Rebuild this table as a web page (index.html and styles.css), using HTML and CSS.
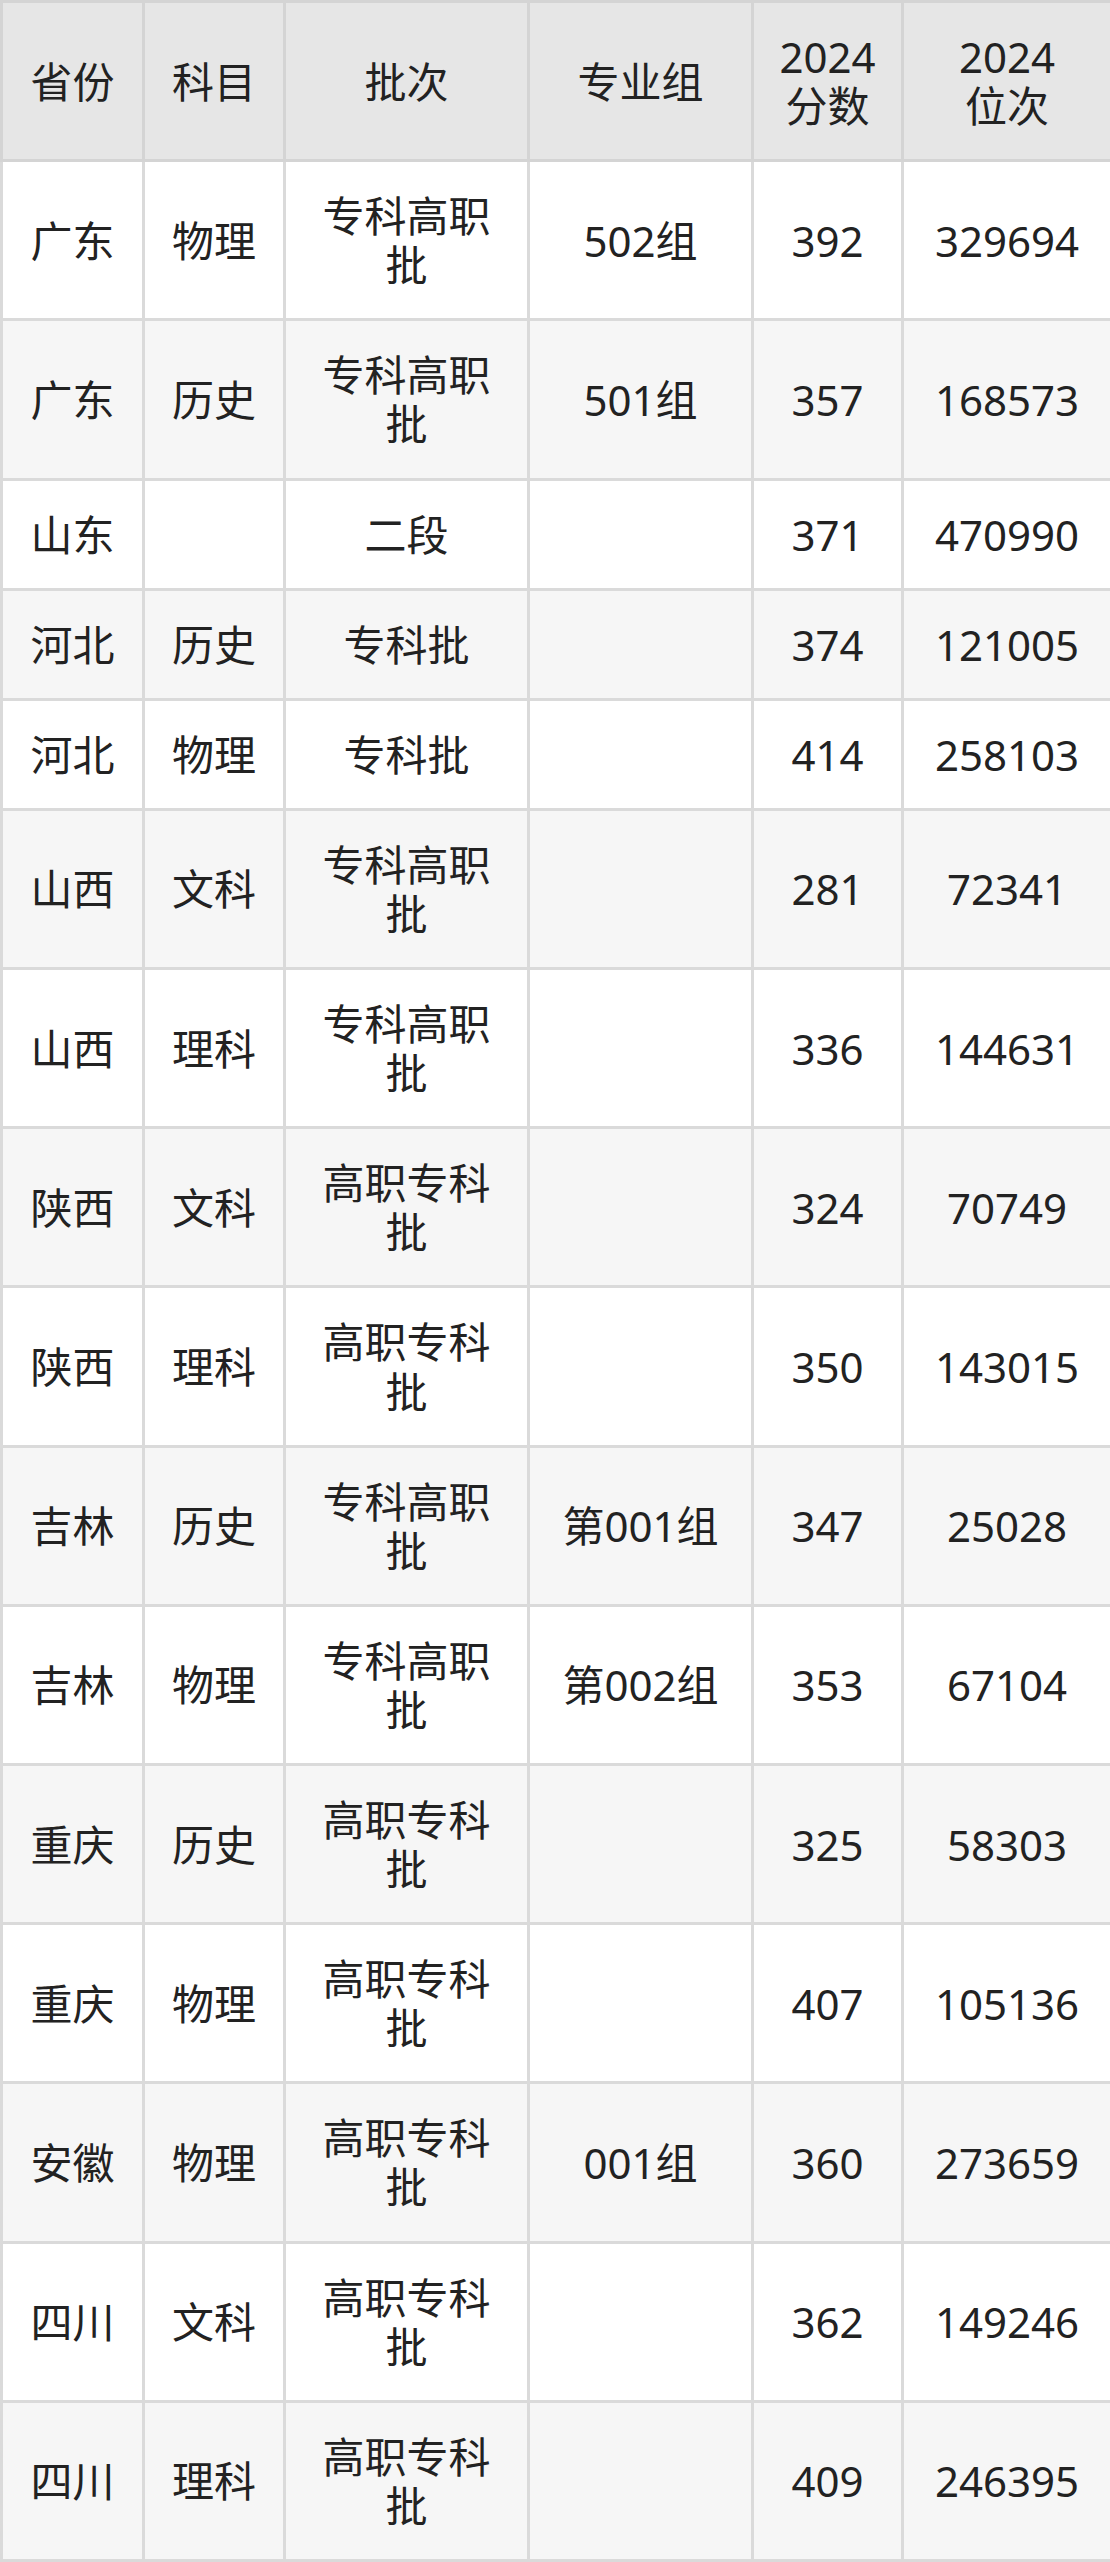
FILE: index.html
```html
<!DOCTYPE html>
<html lang="zh-CN">
<head>
<meta charset="utf-8">
<title>2024 分数位次</title>
<link rel="stylesheet" href="styles.css">
</head>
<body>
<table class="score-table">
  <colgroup>
    <col class="c1"><col class="c2"><col class="c3"><col class="c4"><col class="c5"><col class="c6">
  </colgroup>
  <thead>
    <tr><th>省份</th><th>科目</th><th>批次</th><th>专业组</th><th>2024<br>分数</th><th>2024<br>位次</th></tr>
  </thead>
  <tbody>
    <tr><td>广东</td><td>物理</td><td>专科高职<br>批</td><td>502组</td><td>392</td><td>329694</td></tr>
    <tr><td>广东</td><td>历史</td><td>专科高职<br>批</td><td>501组</td><td>357</td><td>168573</td></tr>
    <tr><td>山东</td><td></td><td>二段</td><td></td><td>371</td><td>470990</td></tr>
    <tr><td>河北</td><td>历史</td><td>专科批</td><td></td><td>374</td><td>121005</td></tr>
    <tr><td>河北</td><td>物理</td><td>专科批</td><td></td><td>414</td><td>258103</td></tr>
    <tr><td>山西</td><td>文科</td><td>专科高职<br>批</td><td></td><td>281</td><td>72341</td></tr>
    <tr><td>山西</td><td>理科</td><td>专科高职<br>批</td><td></td><td>336</td><td>144631</td></tr>
    <tr><td>陕西</td><td>文科</td><td>高职专科<br>批</td><td></td><td>324</td><td>70749</td></tr>
    <tr><td>陕西</td><td>理科</td><td>高职专科<br>批</td><td></td><td>350</td><td>143015</td></tr>
    <tr><td>吉林</td><td>历史</td><td>专科高职<br>批</td><td>第001组</td><td>347</td><td>25028</td></tr>
    <tr><td>吉林</td><td>物理</td><td>专科高职<br>批</td><td>第002组</td><td>353</td><td>67104</td></tr>
    <tr><td>重庆</td><td>历史</td><td>高职专科<br>批</td><td></td><td>325</td><td>58303</td></tr>
    <tr><td>重庆</td><td>物理</td><td>高职专科<br>批</td><td></td><td>407</td><td>105136</td></tr>
    <tr><td>安徽</td><td>物理</td><td>高职专科<br>批</td><td>001组</td><td>360</td><td>273659</td></tr>
    <tr><td>四川</td><td>文科</td><td>高职专科<br>批</td><td></td><td>362</td><td>149246</td></tr>
    <tr><td>四川</td><td>理科</td><td>高职专科<br>批</td><td></td><td>409</td><td>246395</td></tr>
  </tbody>
</table>
</body>
</html>
```
FILE: styles.css
```css
html, body {
  margin: 0;
  padding: 0;
  background: #ffffff;
}

.score-table {
  width: 1110px;
  table-layout: fixed;
  border-collapse: collapse;
  font-family: "Noto Sans", "Noto Sans CJK SC", sans-serif;
  font-size: 42px;
  line-height: 49.1px;
  color: #222222;
}

.c1 { width: 142px; }
.c2 { width: 141px; }
.c3 { width: 244px; }
.c4 { width: 224px; }
.c5 { width: 150px; }
.c6 { width: 209px; }

.score-table th,
.score-table td {
  border: 3px solid #dadada;
  padding: 29px 0;
  text-align: center;
  vertical-align: middle;
  font-weight: normal;
}

.score-table thead th {
  background: #e6e6e6;
  border-color: #d4d4d4;
}

.score-table tbody tr:nth-child(odd) td {
  background: #ffffff;
}

.score-table tbody tr:nth-child(even) td {
  background: #f6f6f6;
}
```
